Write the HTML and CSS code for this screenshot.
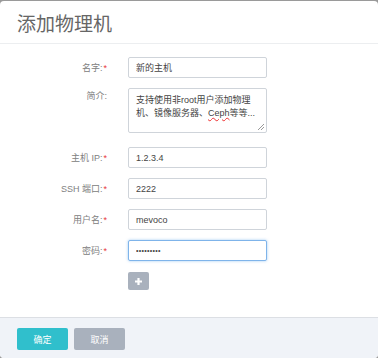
FILE: index.html
```html
<!DOCTYPE html>
<html lang="zh">
<head>
<meta charset="utf-8">
<title>添加物理机</title>
<link rel="stylesheet" href="styles.css">
</head>
<body>
<div class="dialog">
  <div class="header">添加物理机</div>
  <div class="body">
    <div class="row">
      <label class="label">名字:<span class="req">*</span></label>
      <input class="field" type="text" value="新的主机">
    </div>
    <div class="row row-top">
      <label class="label label-top">简介:</label>
      <div class="field area">支持使用非root用户添加物理机、镜像服务器、<span class="spell">Ceph</span>等等...<span class="grip"></span></div>
    </div>
    <div class="row">
      <label class="label">主机 IP:<span class="req">*</span></label>
      <input class="field" type="text" value="1.2.3.4">
    </div>
    <div class="row">
      <label class="label">SSH 端口:<span class="req">*</span></label>
      <input class="field" type="text" value="2222">
    </div>
    <div class="row">
      <label class="label">用户名:<span class="req">*</span></label>
      <input class="field" type="text" value="mevoco">
    </div>
    <div class="row">
      <label class="label">密码:<span class="req">*</span></label>
      <input class="field focus" type="password" value="password1">
    </div>
    <div class="row">
      <span class="label"></span>
      <button class="plus" type="button"><svg width="9" height="9" viewBox="0 0 9 9"><path d="M4.5 1v7M1 4.5h7" stroke="#fff" stroke-width="2.2"/></svg></button>
    </div>
  </div>
  <div class="footer">
    <button class="btn ok" type="button">确定</button>
    <button class="btn cancel" type="button">取消</button>
  </div>
</div>
</body>
</html>
```
FILE: styles.css
```css
html, body {
  margin: 0;
  padding: 0;
}
body {
  background: #9a9a9a;
  width: 378px;
  height: 358px;
  overflow: hidden;
  font-family: "Liberation Sans", "Noto Sans CJK SC", sans-serif;
}
.dialog {
  margin-top: 1px;
  height: 357px;
  background: #fff;
  border-radius: 4px;
  display: flex;
  flex-direction: column;
  overflow: hidden;
}
.header {
  height: 42px;
  border-bottom: 1px solid #eceef0;
  box-sizing: content-box;
  padding-left: 17px;
  font-family: "Noto Sans CJK SC", sans-serif;
  font-size: 19px;
  line-height: 43px;
  color: #666;
}
.body {
  flex: 1;
  padding-top: 13px;
  display: flex;
  flex-direction: column;
  gap: 10px;
}
.row {
  display: flex;
  align-items: center;
  gap: 21px;
}
.row-top {
  align-items: flex-start;
  margin-bottom: 4px;
}
.label {
  width: 107px;
  text-align: right;
  font-size: 9px;
  color: #808080;
  font-family: "Liberation Sans", "Noto Sans CJK SC", sans-serif;
}
.label-top {
  padding-top: 1px;
}
.req {
  color: #e8383d;
  margin-left: 1px;
}
.field {
  box-sizing: border-box;
  width: 139px;
  height: 21px;
  margin: 0;
  padding: 0 7px;
  border: 1px solid #cfd4da;
  border-radius: 2px;
  background: #fff;
  font-family: "Liberation Sans", "Noto Sans CJK SC", sans-serif;
  font-size: 9px;
  color: #444;
  outline: none;
}
.area {
  position: relative;
  height: 45px;
  padding: 5px 7px;
  line-height: 13px;
  color: #444;
}
.spell {
  text-decoration: underline wavy #e33;
  text-decoration-thickness: 1px;
}
.grip {
  position: absolute;
  right: 2px;
  bottom: 2px;
  width: 6px;
  height: 6px;
  background: linear-gradient(135deg, transparent 45%, #999 45%, #999 55%, transparent 55%, transparent 72%, #999 72%, #999 82%, transparent 82%);
}
.focus {
  border-color: #7fb4ea;
  box-shadow: 0 0 3px rgba(102, 170, 235, 0.6);
  font-size: 7px;
  letter-spacing: 0.3px;
}
.plus {
  width: 21px;
  height: 18px;
  margin: 1px 0 0;
  padding: 0;
  border: none;
  border-radius: 2px;
  background: #a9b1bd;
  display: flex;
  align-items: center;
  justify-content: center;
}
.footer {
  border-top: 1px solid #dcdfe4;
  background: #f0f3f8;
  display: flex;
  gap: 6px;
  padding: 10px 0 0 17px;
  box-sizing: border-box;
  height: 41px;
  align-items: flex-start;
}
.btn {
  width: 51px;
  height: 22px;
  border: none;
  border-radius: 2px;
  color: #fff;
  font-size: 9px;
  font-family: "Noto Sans CJK SC", sans-serif;
  padding: 0;
}
.ok {
  background: #30bfcc;
}
.cancel {
  background: #a9b1bd;
}
```
